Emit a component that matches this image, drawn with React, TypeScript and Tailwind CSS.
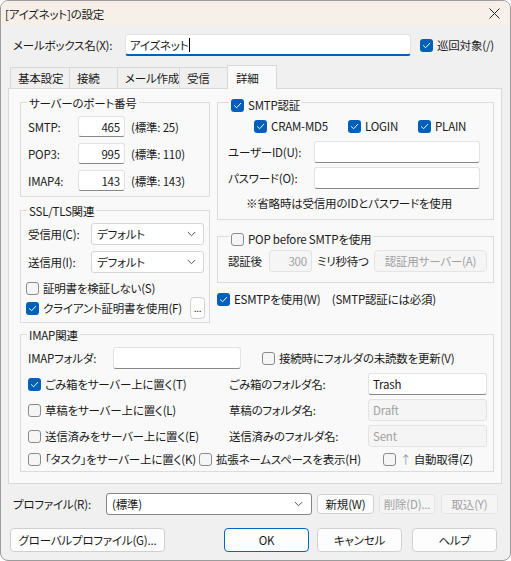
import React from 'react';

type CbProps = { checked?: boolean };

function Box({ checked }: CbProps) {
  if (checked) {
    return (
      <span className="flex h-[13px] w-[13px] shrink-0 items-center justify-center rounded-[3px] bg-[#005fb8]">
        <svg width="9" height="9" viewBox="0 0 10 10" fill="none">
          <path d="M1.6 5.2 L4 7.5 L8.6 2.6" stroke="#fff" strokeWidth="1.1" strokeLinecap="round" strokeLinejoin="round" />
        </svg>
      </span>
    );
  }
  return <span className="h-[13px] w-[13px] shrink-0 rounded-[3px] border border-[#8a8a8a] bg-[#f5f5f5]" />;
}

function Check({
  checked,
  label,
  className = '',
}: {
  checked?: boolean;
  label: React.ReactNode;
  className?: string;
}) {
  return (
    <div className={`flex items-center gap-[4px] whitespace-nowrap ${className}`}>
      <Box checked={checked} />
      <span className="leading-[16px]">{label}</span>
    </div>
  );
}

function Field({
  value = '',
  className = '',
  disabled,
  right,
}: {
  value?: string;
  className?: string;
  disabled?: boolean;
  right?: boolean;
}) {
  return (
    <div
      className={`flex items-center rounded-[3px] border px-[4px] ${
        disabled
          ? 'border-[#e3e3e3] bg-[#f5f5f5] text-[#a0a0a0]'
          : 'border-[#e2e2e2] border-b-[#878787] bg-white'
      } ${right ? 'justify-end' : ''} ${className}`}
    >
      {value}
    </div>
  );
}

function Combo({ value, className = '' }: { value: string; className?: string }) {
  return (
    <div
      className={`flex items-center justify-between rounded-[3px] border border-[#d6d6d6] bg-white pl-[5px] pr-[7px] ${className}`}
    >
      <span>{value}</span>
      <svg width="9" height="6" viewBox="0 0 9 6" fill="none">
        <path d="M0.8 1 L4.5 4.7 L8.2 1" stroke="#555" strokeWidth="1" />
      </svg>
    </div>
  );
}

function Btn({
  children,
  className = '',
  disabled,
  primary,
}: {
  children: React.ReactNode;
  className?: string;
  disabled?: boolean;
  primary?: boolean;
}) {
  const tone = disabled
    ? 'border-[#e5e5e5] bg-[#f5f5f5] text-[#a0a0a0]'
    : primary
    ? 'border-[#0067c0] bg-[#fdfdfd]'
    : 'border-[#d0d0d0] bg-[#fdfdfd]';
  return (
    <div className={`flex items-center justify-center whitespace-nowrap rounded-[4px] border ${tone} ${className}`}>
      {children}
    </div>
  );
}

function Group({
  title,
  className = '',
  children,
  boxTitle,
}: {
  title: React.ReactNode;
  className?: string;
  children: React.ReactNode;
  boxTitle?: boolean;
}) {
  return (
    <div className={`relative border border-[#dcdcdc] ${className}`}>
      <div
        className={`absolute flex h-[16px] items-center whitespace-nowrap bg-[#f9f9f9] px-[2px] leading-[16px] ${
          boxTitle ? 'left-[11px] top-[-6px]' : 'left-[6px] top-[-8px]'
        }`}
      >
        {title}
      </div>
      {children}
    </div>
  );
}

const tabs = [
  { name: '基本設定', w: 'w-[59px]' },
  { name: '接続', w: 'w-[48px]' },
  { name: 'メール作成', w: 'w-[62px]' },
  { name: '受信', w: 'w-[48px]' },
];

export default function App() {
  return (
    <div className="box-border flex h-[561px] w-[511px] flex-col overflow-hidden whitespace-nowrap rounded-[8px] border border-[#9c9c9c] bg-[#f0f0f0] font-['Noto_Sans_CJK_JP',sans-serif] text-[11.5px] leading-[16px] tracking-[-0.2px] text-[#1a1a1a] [font-feature-settings:'palt']">
      {/* title bar */}
      <div className="flex h-[25px] shrink-0 items-center justify-between bg-[#f7f0e8] pl-[4px] pr-[10px]">
        <span>[アイズネット]の設定</span>
        <svg width="11" height="11" viewBox="0 0 11 11" fill="none">
          <path d="M0.5 0.5 L10.5 10.5 M10.5 0.5 L0.5 10.5" stroke="#222" strokeWidth="1" />
        </svg>
      </div>

      {/* mailbox name */}
      <div className="mt-[8px] flex h-[22px] items-center pl-[12px]">
        <span className="w-[112px]">メールボックス名(X):</span>
        <div className="flex h-[22px] w-[286px] items-center rounded-[3px] border border-[#e2e2e2] border-b-2 border-b-[#005fb8] bg-white pl-[4px]">
          アイズネット
          <span className="ml-[1px] h-[14px] w-px bg-black" />
        </div>
        <Check checked label="巡回対象(/)" className="ml-[9px]" />
      </div>

      {/* tabs */}
      <div className="ml-[7px] mt-[9px] w-[494px]">
        <div className="flex h-[23px] items-end pl-[2px]">
          {tabs.map((t) => (
            <div
              key={t.name}
              className={`flex h-[21px] items-center border-l border-t border-[#d9d9d9] pl-[7px] ${t.w}`}
            >
              {t.name}
            </div>
          ))}
          <div className="relative z-10 mb-[-1px] flex h-[24px] w-[50px] items-center border-x border-t border-[#d9d9d9] bg-[#f9f9f9] pl-[8px]">
            詳細
          </div>
        </div>

        {/* panel */}
        <div className="border border-[#d9d9d9] bg-[#f9f9f9] pb-[11px] pl-[11px] pt-[13px]">
          <div className="flex gap-[7px]">
            {/* left column */}
            <div className="flex w-[190px] flex-col">
              <Group title="サーバーのポート番号" className="pb-[5px] pl-[7px] pt-[13px]">
                <div className="flex flex-col gap-[6px]">
                  {[
                    ['SMTP:', '465', '(標準: 25)'],
                    ['POP3:', '995', '(標準: 110)'],
                    ['IMAP4:', '143', '(標準: 143)'],
                  ].map(([l, v, s]) => (
                    <div key={l} className="flex h-[21px] items-center">
                      <span className="w-[50px]">{l}</span>
                      <Field value={v} right className="h-[21px] w-[47px]" />
                      <span className="ml-[6px]">{s}</span>
                    </div>
                  ))}
                </div>
              </Group>

              <Group title="SSL/TLS関連" className="mt-[13px] pb-[3px] pl-[7px] pr-[4px] pt-[12px]">
                <div className="flex h-[22px] items-center">
                  <span className="w-[63px]">受信用(C):</span>
                  <Combo value="デフォルト" className="h-[22px] w-[113px]" />
                </div>
                <div className="mt-[6px] flex h-[22px] items-center">
                  <span className="w-[63px]">送信用(I):</span>
                  <Combo value="デフォルト" className="h-[22px] w-[113px]" />
                </div>
                <div className="ml-[-2px] mt-[7px] flex h-[16px] items-center">
                  <Check label="証明書を検証しない(S)" />
                </div>
                <div className="ml-[-2px] mt-[1px] flex h-[22px] items-center justify-between">
                  <Check checked label="クライアント証明書を使用(F)" />
                  <Btn className="h-[22px] w-[15px] text-[10px] leading-none">...</Btn>
                </div>
              </Group>
            </div>

            {/* right column */}
            <div className="flex w-[277px] flex-col">
              <Group boxTitle title={<Check checked label="SMTP認証" />} className="pb-[8px] pt-[15px]">
                <div className="flex h-[16px] items-center pl-[36px]">
                  <Check checked label="CRAM-MD5" className="w-[94px]" />
                  <Check checked label="LOGIN" className="w-[70px]" />
                  <Check checked label="PLAIN" />
                </div>
                <div className="mt-[7px] flex h-[22px] items-center pl-[10px]">
                  <span className="w-[86px]">ユーザーID(U):</span>
                  <Field className="h-[22px] w-[166px]" />
                </div>
                <div className="mt-[4px] flex h-[22px] items-center pl-[10px]">
                  <span className="w-[86px]">パスワード(O):</span>
                  <Field className="h-[22px] w-[166px]" />
                </div>
                <div className="mt-[6px] h-[16px] pl-[28px]">※省略時は受信用のIDとパスワードを使用</div>
              </Group>

              <Group
                boxTitle
                title={<Check label="POP before SMTPを使用" />}
                className="mt-[16px] pb-[10px] pl-[10px] pt-[12px]"
              >
                <div className="flex h-[23px] items-center">
                  <span className="w-[41px]">認証後</span>
                  <Field value="300" right disabled className="h-[22px] w-[43px]" />
                  <span className="ml-[5px] w-[57px]">ミリ秒待つ</span>
                  <Btn disabled className="h-[22px] w-[113px]">
                    認証用サーバー(A)
                  </Btn>
                </div>
              </Group>

              <div className="mt-[8px] flex h-[16px] items-center">
                <Check checked label="ESMTPを使用(W)　(SMTP認証には必須)" />
              </div>
            </div>
          </div>

          {/* IMAP */}
          <Group title="IMAP関連" className="mt-[11px] w-[474px] pb-[4px] pl-[7px] pt-[12px]">
            <div className="flex flex-col gap-[4px]">
              <div className="flex h-[22px] items-center">
                <span className="w-[85px]">IMAPフォルダ:</span>
                <Field className="h-[22px] w-[128px]" />
                <Check label="接続時にフォルダの未読数を更新(V)" className="ml-[21px]" />
              </div>
              {[
                { c: true, l: 'ごみ箱をサーバー上に置く(T)', n: 'ごみ箱のフォルダ名:', v: 'Trash', d: false },
                { c: false, l: '草稿をサーバー上に置く(L)', n: '草稿のフォルダ名:', v: 'Draft', d: true },
                { c: false, l: '送信済みをサーバー上に置く(E)', n: '送信済みのフォルダ名:', v: 'Sent', d: true },
              ].map((r) => (
                <div key={r.n} className="flex h-[22px] items-center">
                  <Check checked={r.c} label={r.l} className="w-[201px]" />
                  <span className="w-[139px]">{r.n}</span>
                  <Field value={r.v} disabled={r.d} className="h-[22px] w-[119px]" />
                </div>
              ))}
              <div className="flex h-[16px] items-center">
                <Check label="「タスク」をサーバー上に置く(K)" className="w-[171px]" />
                <Check label="拡張ネームスペースを表示(H)" className="w-[184px]" />
                <Check
                  label={
                    <>
                      <span className="text-[#9a9a9a]">↑</span> 自動取得(Z)
                    </>
                  }
                />
              </div>
            </div>
          </Group>
        </div>
      </div>

      {/* profile */}
      <div className="mt-[9px] flex h-[22px] items-center pl-[12px]">
        <span className="w-[93px]">プロファイル(R):</span>
        <div className="flex h-[22px] w-[206px] items-center justify-between rounded-[3px] border border-[#868686] bg-white pl-[5px] pr-[8px]">
          <span>(標準)</span>
          <svg width="9" height="6" viewBox="0 0 9 6" fill="none">
            <path d="M0.8 1 L4.5 4.7 L8.2 1" stroke="#555" strokeWidth="1" />
          </svg>
        </div>
        <Btn className="ml-[5px] h-[20px] w-[57px]">新規(W)</Btn>
        <Btn disabled className="ml-[5px] h-[20px] w-[56px]">
          削除(D)...
        </Btn>
        <Btn disabled className="ml-[6px] h-[20px] w-[57px]">
          取込(Y)
        </Btn>
      </div>

      {/* buttons */}
      <div className="mt-[13px] flex h-[24px] items-center pl-[9px]">
        <Btn className="h-[24px] w-[155px]">グローバルプロファイル(G)...</Btn>
        <Btn primary className="ml-[59px] h-[24px] w-[85px]">
          OK
        </Btn>
        <Btn className="ml-[8px] h-[24px] w-[85px]">キャンセル</Btn>
        <Btn className="ml-[10px] h-[24px] w-[85px]">ヘルプ</Btn>
      </div>
    </div>
  );
}
